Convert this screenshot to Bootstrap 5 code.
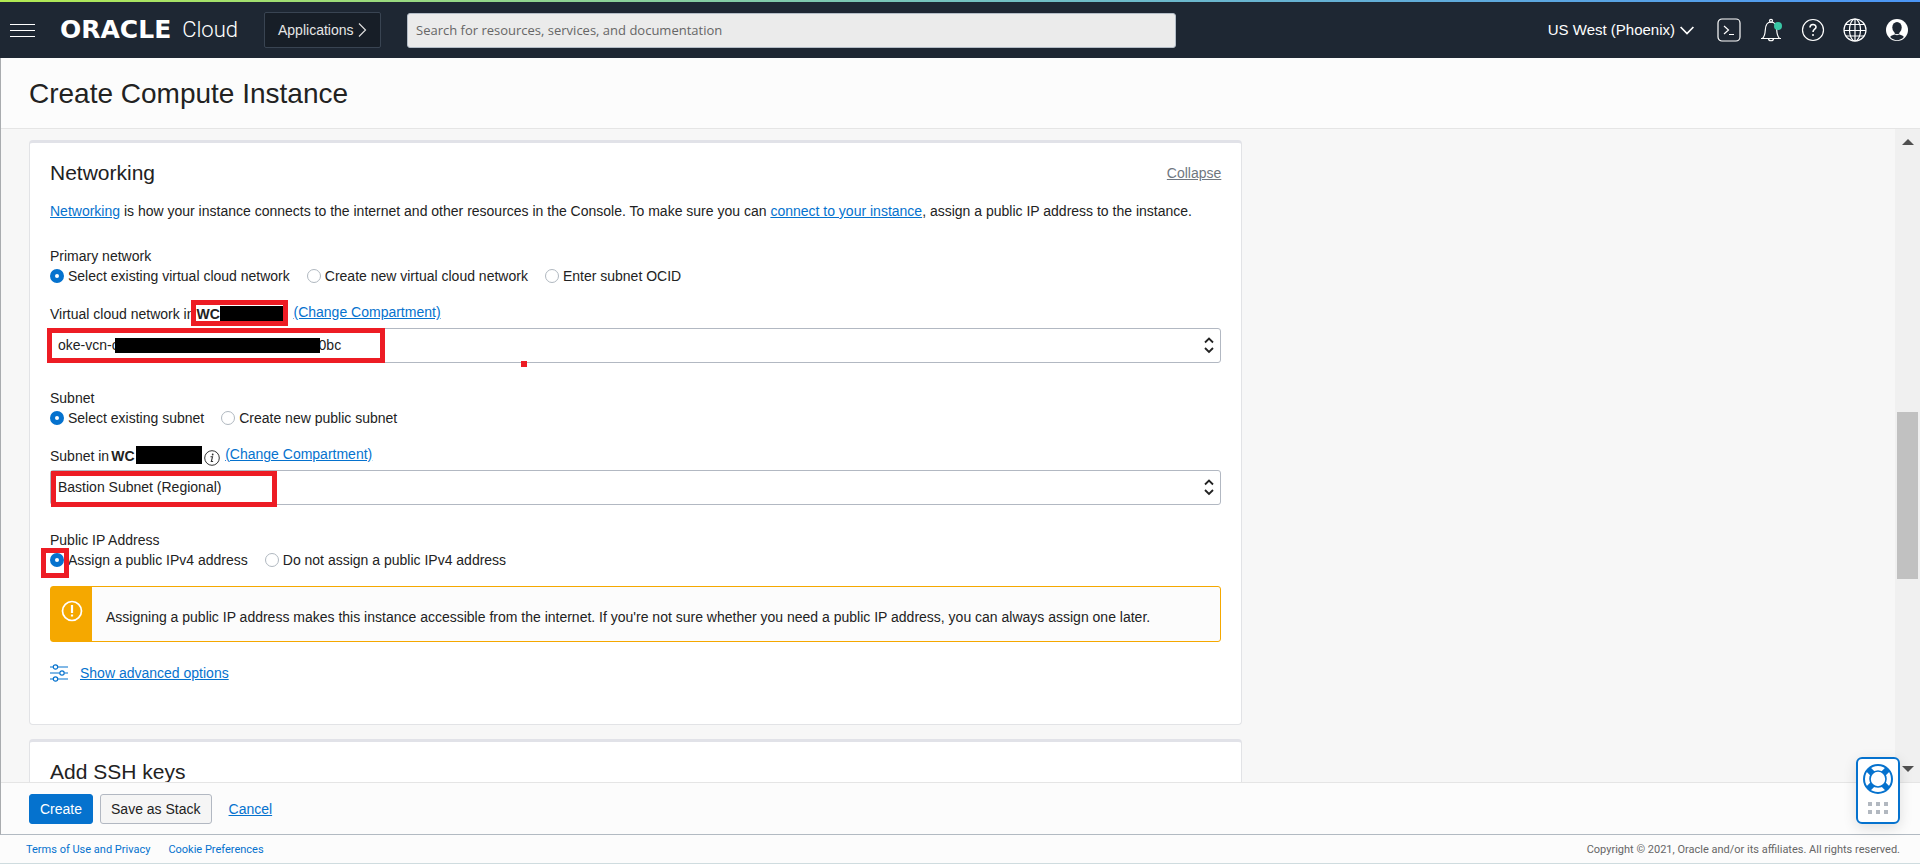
<!DOCTYPE html>
<html lang="en">
<head>
<meta charset="utf-8">
<meta name="viewport" content="width=device-width, initial-scale=1">
<title>Create Compute Instance</title>
<link href="https://cdn.jsdelivr.net/npm/bootstrap@5.3.0/dist/css/bootstrap.min.css" rel="stylesheet">
<style>
body{font-family:"Liberation Sans",Arial,sans-serif;font-size:14px;line-height:20px;color:#222;background:#fcfcfc}
a{color:#0572ce;text-decoration:underline}
.accent-strip{height:2px;background:linear-gradient(90deg,#b2ea52,#75c2c0 50%,#4b95f5)}
.topbar{height:56px;background:#1e2733;color:#fff;padding:0 11px 0 10px}
.icon-btn{background:none;border:0;padding:0;display:flex;color:#fff}
.brand{color:#fff;text-decoration:none;margin-left:25px;width:178px}
.brand-bold{font:700 25px/30px "DejaVu Sans",sans-serif}
.brand-light{font:300 22px/30px Roboto,sans-serif}
.apps-btn{height:36px;width:117px;margin-left:26px;background:#171e27;border:1px solid #394452;border-radius:2px;color:#e6e6e6;padding:0 13px}
.search-box{width:40.5%;height:35px;margin-left:26px;background:#ebebeb;border:1px solid #b4bdc7;border-radius:3px;padding:0 8px;font:13px "Open Sans",sans-serif}
.search-box::placeholder{color:#666;opacity:1}
.region-btn{font-size:15px;margin-right:23px;gap:5px}
.icon-row{gap:18px}
.workspace{border-left:1px solid #a9acaf;border-bottom:1px solid #b2bac2;min-height:0}
.page-head{height:71px;border-bottom:1px solid #e5e5e5;padding:2px 28px 0}
.page-head h1{font-size:28px;line-height:36px;font-weight:400}
.scroll-zone{background:#f7f7f7;min-height:0}
.sections{padding:11px 14px 0 12px}
.panel{background:#fff;border:1px solid #e2e3e6;border-top:3px solid #e1e2e8;border-radius:4px;padding:18px 20px 41px;margin-bottom:14px}
.panel h2{font-size:21px;line-height:24px;font-weight:400}
.muted-link{color:#6f7780}
.intro{margin:16px 0 25px}
.field-group{margin-bottom:25px}
.group-title{font-size:14px;line-height:20px;float:none}
.choices{gap:17px}
.choice{gap:4px}
.choice input{appearance:none;width:14px;height:14px;margin:0;border:1px solid #b0b8c0;border-radius:50%;background:#fff}
.choice input:checked{border:5px solid #0572ce}
.caption-row{margin:16px 0 6px;height:20px}
.caption-row label{padding-top:2px}
.scope{width:97px;margin-left:2px}
.scope-sub{width:110px}
.select-box{width:100%;height:35px;appearance:none;border:1px solid #b2b8c2;border-radius:3px;background:#fff;color:#222;padding:0 7px;line-height:20px;padding-bottom:1px}
.updown{right:7px;top:9px;pointer-events:none}
.redact{background:#000}
.marker{border:5px solid #ed1c24;pointer-events:none}
.info-icon{margin:6px 5px 0 -17px}
.notice{height:56px;margin-top:16px;border:1px solid #f5a800;border-radius:3px;background:#fcfcfc}
.notice-icon{width:41px;background:#f5a800;padding-top:13px}
.notice p{padding:5px 14px 0}
.advanced{margin-top:21px;gap:12px}
.scroll-rail{width:25px;background:#f0f0f0;padding:10px 2px}
.thumb{top:283px;left:2px;right:2px;height:167px;background:#c1c1c1}
.action-bar{height:52px;border-top:1px solid #e5e5e5;background:#fcfcfc;padding:0 28px;gap:7px}
.action-bar .btn{font-size:14px;line-height:20px;height:30px;padding:0 10px;border-radius:3px}
.btn-create{background:#0572ce;border-color:#0572ce;color:#fff}
.btn-stack{background:#f5f5f5;border-color:#b2b8c2;color:#222}
.cancel-link{margin-left:10px}
.legal{height:29px;border-bottom:1px solid #cfdcdf;padding:2px 20px 0 26px;font:11px/16px Roboto,sans-serif;color:#666}
.legal a{text-decoration:none;margin-right:18px}
.help-pod{right:20px;bottom:40px;width:44px;height:67px;background:#fff;border:2px solid #0572ce;border-radius:6px;padding:5px 0 0;box-shadow:0 4px 14px rgba(0,0,0,.12)}
</style>
</head>
<body class="vh-100 d-flex flex-column overflow-hidden">
<div class="accent-strip flex-shrink-0"></div>
<header class="topbar d-flex align-items-center flex-shrink-0">
  <button class="icon-btn" type="button" aria-label="Menu"><svg width="25" height="15" fill="none" stroke="#fff"><path d="M0 1.500h25M0 7.500h25M0 13.500h25"/></svg></button>
  <a class="brand d-flex align-items-center justify-content-between" href="#"><span class="brand-bold">ORACLE</span><span class="brand-light">Cloud</span></a>
  <button class="apps-btn d-flex align-items-center justify-content-between" type="button">Applications<svg width="9" height="14" fill="none" stroke="#ddd" stroke-width="1.200"><path d="M1 .5l6.500 6.500L1 13.500"/></svg></button>
  <input class="search-box" type="search" aria-label="Search" placeholder="Search for resources, services, and documentation">
  <button class="icon-btn region-btn align-items-center ms-auto" type="button">US West (Phoenix)<svg width="14" height="9" fill="none" stroke="#fff" stroke-width="1.700"><path d="M.6 1l6.400 6.500L13.400 1"/></svg></button>
  <div class="icon-row d-flex">
    <button class="icon-btn" type="button" aria-label="Cloud Shell"><svg width="24" height="24" fill="none" stroke="#fff" stroke-width="1.200"><rect x="1" y="1" width="22" height="22" rx="4"/><path d="M7 8l4.500 4L7 16M12 16.500h5"/></svg></button>
    <button class="icon-btn" type="button" aria-label="Notifications"><svg width="24" height="24" fill="none" stroke="#fff" stroke-width="1.200"><path d="M2 20.500h20M3.500 20.500c2-2 2.500-4 2.800-8.500C6.500 7 8.500 4 12 4s5.500 3 5.700 8c.3 4.500.8 6.500 2.800 8.500"/><circle cx="12" cy="2.800" r="1.500"/><path d="M9.500 20.500c0 3 5 3 5 0"/><circle cx="19" cy="8" r="4" fill="#39c6a5" stroke="none"/></svg></button>
    <button class="icon-btn" type="button" aria-label="Help"><svg width="24" height="24" fill="none" stroke="#fff" stroke-width="1.200"><circle cx="12" cy="12" r="10.500"/><path d="M9 9.500c0-4 6-4 6-.5 0 2.200-3 2.200-3 5" stroke-width="1.600"/><circle cx="12" cy="17" r="1" fill="#fff" stroke="none"/></svg></button>
    <button class="icon-btn" type="button" aria-label="Language"><svg width="24" height="24" fill="none" stroke="#fff" stroke-width="1.200"><circle cx="12" cy="12" r="11"/><ellipse cx="12" cy="12" rx="5.500" ry="11"/><path d="M1 12.500h22M3 6.500h18M3 18h18M12 1v22"/></svg></button>
    <button class="icon-btn" type="button" aria-label="Profile"><svg width="24" height="24"><circle cx="12" cy="12" r="11" fill="#fff"/><ellipse cx="12" cy="9.500" rx="4.700" ry="5.500" fill="#1e2733"/><path d="M9.500 13h5v3.500c2 .5 3.500 1 4.300 2.500C15 23.200 9 23.200 5.200 19c.8-1.500 2.300-2 4.300-2.500z" fill="#1e2733"/><path d="M8.800 15.500c2 1.600 4.400 1.600 6.400 0" stroke="#fff" stroke-width="1" fill="none"/></svg></button>
  </div>
</header>

<div class="workspace flex-grow-1 d-flex flex-column">
  <div class="page-head d-flex align-items-center flex-shrink-0"><h1 class="m-0">Create Compute Instance</h1></div>
  <div class="scroll-zone flex-grow-1 d-flex overflow-hidden">
    <main class="sections flex-grow-1">
      <div class="row m-0"><div class="col-8 px-3">
        <section class="panel">
          <div class="d-flex justify-content-between align-items-center"><h2 class="m-0">Networking</h2><a class="muted-link" href="#">Collapse</a></div>
          <p class="intro"><a href="#">Networking</a> is how your instance connects to the internet and other resources in the Console. To make sure you can <a href="#">connect to your instance</a>, assign a public IP address to the instance.</p>

          <div class="field-group">
            <fieldset>
              <legend class="group-title m-0">Primary network</legend>
              <div class="choices d-flex">
                <label class="choice d-flex align-items-center"><input type="radio" name="vcn" checked>Select existing virtual cloud network</label>
                <label class="choice d-flex align-items-center"><input type="radio" name="vcn">Create new virtual cloud network</label>
                <label class="choice d-flex align-items-center"><input type="radio" name="vcn">Enter subnet OCID</label>
              </div>
            </fieldset>
            <div class="caption-row d-flex">
              <label class="d-flex" for="vcnSelect">Virtual cloud network in<strong class="scope position-relative d-block">WC<span class="redact position-absolute" style="left:24px;top:2px;width:64px;height:16px"></span><span class="marker position-absolute" style="left:-5px;top:-4px;width:97px;height:26px"></span></strong></label>
              <a href="#">(Change Compartment)</a>
            </div>
            <div class="position-relative">
              <select class="select-box d-block" id="vcnSelect"><option>oke-vcn-c&emsp;&emsp;&emsp;&emsp;&emsp;&emsp;&emsp;&emsp;&emsp;&emsp;&emsp;&emsp;&emsp;&emsp;&nbsp;0bc</option></select>
              <svg class="updown position-absolute" width="10" height="17" fill="none" stroke="#222" stroke-width="1.800"><path d="M1 5.500l4-4 4 4M1 11l4 4 4-4"/></svg>
              <span class="redact position-absolute" style="left:65px;top:10px;width:205px;height:15px"></span>
              <span class="marker position-absolute" style="left:-3px;top:0;width:338px;height:35px"></span>
              <span class="position-absolute" style="left:471px;top:33px;width:6px;height:6px;background:#ed1c24"></span>
            </div>
          </div>

          <div class="field-group">
            <fieldset>
              <legend class="group-title m-0">Subnet</legend>
              <div class="choices d-flex">
                <label class="choice d-flex align-items-center"><input type="radio" name="subnet" checked>Select existing subnet</label>
                <label class="choice d-flex align-items-center"><input type="radio" name="subnet">Create new public subnet</label>
              </div>
            </fieldset>
            <div class="caption-row d-flex">
              <label class="d-flex" for="subnetSelect">Subnet in<strong class="scope scope-sub position-relative d-block">WC<span class="redact position-absolute" style="left:25px;top:0;width:66px;height:18px"></span></strong></label>
              <svg width="16" height="16" class="info-icon flex-shrink-0" fill="none" stroke="#333"><circle cx="8" cy="8" r="7.300"/><path d="M6.500 6.800h2L7.300 11.500h1.800" stroke-width="1.100"/><circle cx="8.700" cy="4.500" r=".9" fill="#333" stroke="none"/></svg>
              <a href="#">(Change Compartment)</a>
            </div>
            <div class="position-relative">
              <select class="select-box d-block" id="subnetSelect"><option>Bastion Subnet (Regional)</option></select>
              <svg class="updown position-absolute" width="10" height="17" fill="none" stroke="#222" stroke-width="1.800"><path d="M1 5.500l4-4 4 4M1 11l4 4 4-4"/></svg>
              <span class="marker position-absolute" style="left:1px;top:1px;width:226px;height:36px"></span>
            </div>
          </div>

          <fieldset>
            <legend class="group-title m-0">Public IP Address</legend>
            <div class="choices d-flex position-relative">
              <label class="choice d-flex align-items-center"><input type="radio" name="ip" checked>Assign a public IPv4 address</label>
              <label class="choice d-flex align-items-center"><input type="radio" name="ip">Do not assign a public IPv4 address</label>
              <span class="marker position-absolute" style="left:-9px;top:-2px;width:28px;height:30px"></span>
            </div>
          </fieldset>

          <div class="notice d-flex" role="alert">
            <div class="notice-icon d-flex justify-content-center align-items-start flex-shrink-0"><svg width="22" height="22" fill="none" stroke="#fff" stroke-width="1.700"><circle cx="11" cy="11" r="9.500"/><path d="M11 5v8M11 14.500v2" stroke-width="2.200"/></svg></div>
            <p class="m-0 align-self-center">Assigning a public IP address makes this instance accessible from the internet. If you're not sure whether you need a public IP address, you can always assign one later.</p>
          </div>

          <div class="advanced d-flex align-items-center">
            <svg width="18" height="18" fill="none" stroke="#0572ce" stroke-width="1.200"><path d="M0 3h3M8 3h10M0 9h9.500M14.500 9H18M0 15h3M8 15h10"/><circle cx="5.500" cy="3" r="2.200"/><circle cx="12" cy="9" r="2.200"/><circle cx="5.500" cy="15" r="2.200"/></svg>
            <a href="#">Show advanced options</a>
          </div>
        </section>
        <section class="panel"><h2 class="m-0">Add SSH keys</h2></section>
      </div></div>
    </main>
    <div class="scroll-rail position-relative flex-shrink-0 d-flex flex-column justify-content-between align-items-center" aria-hidden="true">
      <svg width="12" height="6"><path d="M6 0l6 6H0z" fill="#505050"/></svg>
      <div class="thumb position-absolute"></div>
      <svg width="12" height="6"><path d="M0 0h12L6 6z" fill="#505050"/></svg>
    </div>
  </div>
  <div class="action-bar d-flex align-items-center flex-shrink-0">
    <button class="btn btn-create" type="button">Create</button>
    <button class="btn btn-stack" type="button">Save as Stack</button>
    <a class="cancel-link" href="#">Cancel</a>
  </div>
</div>

<footer class="legal d-flex align-items-center flex-shrink-0">
  <a href="#">Terms of Use and Privacy</a><a href="#">Cookie Preferences</a>
  <span class="ms-auto">Copyright © 2021, Oracle and/or its affiliates. All rights reserved.</span>
</footer>

<button class="help-pod position-fixed d-flex flex-column align-items-center" type="button" aria-label="Support">
  <svg width="30" height="30" viewBox="0 0 30 30" fill="none" stroke="#0572ce"><g stroke-width="6"><path d="M5 5l6 6M25 5l-6 6M5 25l6-6M25 25l-6-6"/></g><circle cx="15" cy="15" r="8" fill="#fff" stroke-width="1.600"/><circle cx="15" cy="15" r="14" stroke-width="2"/></svg>
  <svg class="mt-2" width="20" height="12" fill="#b2b8c0"><path d="M0 0h4v4H0zM8 0h4v4H8zM16 0h4v4h-4zM0 8h4v4H0zM8 8h4v4H8zM16 8h4v4h-4z"/></svg>
</button>
<script src="https://cdn.jsdelivr.net/npm/bootstrap@5.3.0/dist/js/bootstrap.bundle.min.js"></script>
</body>
</html>
